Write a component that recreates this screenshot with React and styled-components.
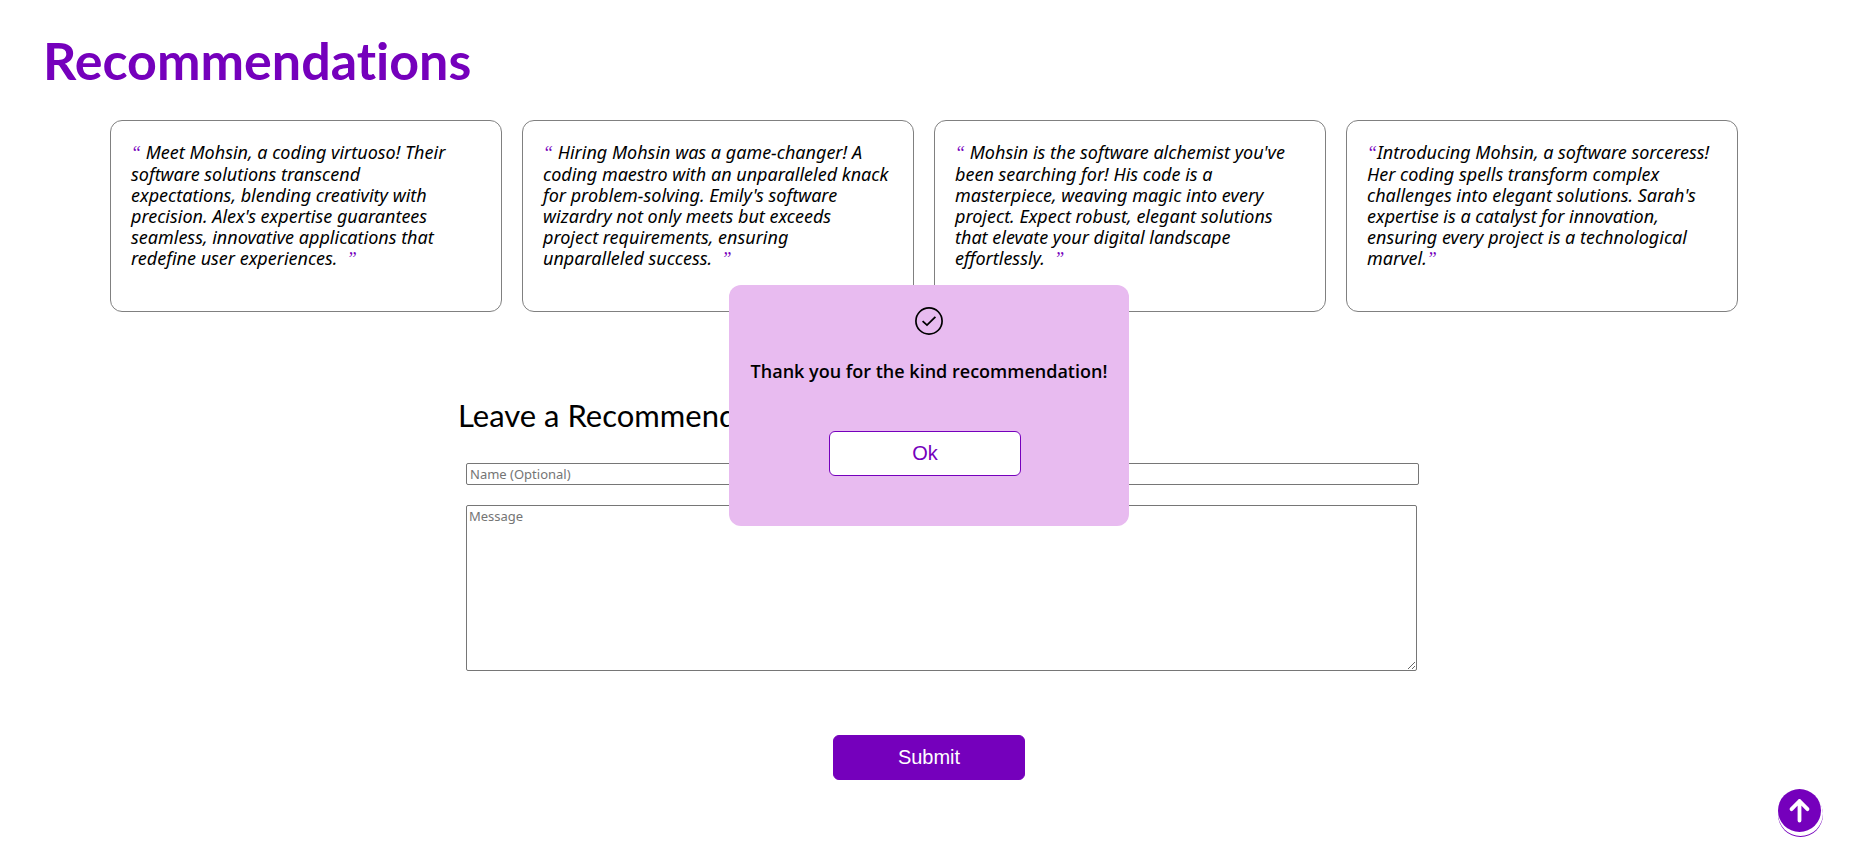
import React from "react";
import styled, { createGlobalStyle, css } from "styled-components";

const purple = "#7500bc";

const GlobalStyle = createGlobalStyle`
  *, *::before, *::after { box-sizing: border-box; }
  body {
    margin: 0;
    background: #fff;
    color: #000;
    font-family: "Trebuchet MS", "Noto Sans", sans-serif;
  }
`;

const Page = styled.main`
  display: flex;
  flex-direction: column;
  min-height: 100vh;
  padding: 30px 4px 70px 0;
`;

const Title = styled.h1`
  margin: 0 0 30px;
  padding-left: 43px;
  color: ${purple};
  font-family: "Trebuchet MS", Lato, sans-serif;
  font-size: 52px;
  font-weight: 700;
  font-variant-ligatures: none;
  line-height: 60px;
`;

const Cards = styled.section`
  display: grid;
  grid-template-columns: repeat(4, minmax(0, 1fr));
  gap: 20px;
  padding: 0 120px 0 110px;
`;

const Card = styled.blockquote`
  min-height: 192px;
  margin: 0;
  padding: 21px 18px 20px 20px;
  border: 1px solid #808080;
  border-radius: 12px;
  font-size: 18px;
  font-style: italic;
  line-height: 21px;
  white-space: pre-line;
`;

const Mark = styled.span`
  color: ${purple};
  font-family: "Liberation Serif", serif;
`;

const Form = styled.form`
  display: flex;
  flex-direction: column;
  align-items: center;
  margin-top: 83px;
`;

const Fields = styled.div`
  display: flex;
  flex-direction: column;
  width: 100%;
  max-width: 994px;
  padding-left: 26px;
`;

const FormTitle = styled.h2`
  margin: 0 0 28px;
  font-family: "Trebuchet MS", Lato, sans-serif;
  font-size: 31px;
  font-weight: 400;
  line-height: 40px;
`;

const fieldStyle = css`
  border: 1px solid #767676;
  border-radius: 2px;
  background: #fff;
  color: #000;
  font-family: inherit;
  font-size: 13px;
  line-height: 16px;

  &::placeholder { color: #757575; }
`;

const NameInput = styled.input`
  ${fieldStyle}
  height: 22px;
  margin: 0 7px 20px 8px;
  padding: 1px 3px;
`;

const MessageInput = styled.textarea`
  ${fieldStyle}
  height: 166px;
  margin: 0 9px 0 8px;
  padding: 2px;
  resize: both;
`;

const Button = styled.button`
  width: 192px;
  height: 45px;
  padding: 0;
  border: 1px solid ${purple};
  border-radius: 6px;
  background: ${(p) => (p.$outline ? "#fff" : purple)};
  color: ${(p) => (p.$outline ? purple : "#fff")};
  font-family: "Liberation Sans", Arial, sans-serif;
  font-size: 20px;
  cursor: pointer;
`;

const SubmitRow = styled.div`
  margin-top: 64px;
`;

const Overlay = styled.div`
  position: fixed;
  inset: 0 4px 0 0;
  display: flex;
  align-items: flex-start;
  justify-content: center;
  padding-top: 285px;
  pointer-events: none;
`;

const Dialog = styled.div`
  display: flex;
  flex-direction: column;
  align-items: center;
  width: 400px;
  min-height: 241px;
  padding: 22px 12px;
  border-radius: 12px;
  background: #e8bbf0;
  pointer-events: auto;
`;

const DialogText = styled.p`
  margin: 24px 0 48px;
  font-family: "Trebuchet MS", "Open Sans", sans-serif;
  font-size: 18px;
  font-weight: 600;
  line-height: 24px;
  white-space: nowrap;
`;

const DialogActions = styled.div`
  padding-right: 8px;
`;

const ToTop = styled.a`
  position: fixed;
  right: 41px;
  bottom: 18px;
  display: flex;
  align-items: center;
  justify-content: center;
  width: 43px;
  height: 43px;
  border-radius: 50%;
  background: ${purple};
  box-shadow: 1px 3px 0 1px #fff, 1px 4px 0 1px ${purple};
`;

const recommendations = [
  {
    text: `Meet Mohsin, a coding virtuoso! Their
software solutions transcend
expectations, blending creativity with
precision. Alex's expertise guarantees
seamless, innovative applications that
redefine user experiences.`,
  },
  {
    text: `Hiring Mohsin was a game-changer! A
coding maestro with an unparalleled knack
for problem-solving. Emily's software
wizardry not only meets but exceeds
project requirements, ensuring
unparalleled success.`,
  },
  {
    text: `Mohsin is the software alchemist you've
been searching for! His code is a
masterpiece, weaving magic into every
project. Expect robust, elegant solutions
that elevate your digital landscape
effortlessly.`,
  },
  {
    text: `Introducing Mohsin, a software sorceress!
Her coding spells transform complex
challenges into elegant solutions. Sarah's
expertise is a catalyst for innovation,
ensuring every project is a technological
marvel.`,
    tight: true,
  },
];

function Recommendation({ text, tight }) {
  const open = tight ? "" : "\u00a0";
  const close = tight ? "" : "\u00a0\u00a0";
  return (
    <Card>
      <Mark>“</Mark>
      {open}
      {text}
      {close}
      <Mark>”</Mark>
    </Card>
  );
}

function CheckIcon() {
  return (
    <svg width="28" height="28" viewBox="0 0 28 28" fill="none" stroke="#000" aria-hidden="true">
      <circle cx="14" cy="14" r="13.1" strokeWidth="1.7" />
      <path d="M7.6 14.1 12 18.1 20.4 9.8" strokeWidth="1.8" />
    </svg>
  );
}

function ArrowIcon() {
  return (
    <svg width="43" height="43" viewBox="0 0 43 43" fill="none" stroke="#fff" aria-hidden="true">
      <path d="M21.5 31.5V12M13.5 20.2 21.5 12l8 8.2" strokeWidth="3.8" strokeLinecap="round" strokeLinejoin="round" />
    </svg>
  );
}

export default function App() {
  return (
    <>
      <GlobalStyle />
      <Page id="top">
        <Title>Recommendations</Title>
        <Cards>
          {recommendations.map((r) => (
            <Recommendation key={r.text} {...r} />
          ))}
        </Cards>
        <Form onSubmit={(e) => e.preventDefault()}>
          <Fields>
            <FormTitle>Leave a Recommendation</FormTitle>
            <NameInput type="text" aria-label="Name (Optional)" placeholder="Name (Optional)" />
            <MessageInput aria-label="Message" placeholder="Message" />
          </Fields>
          <SubmitRow>
            <Button type="submit">Submit</Button>
          </SubmitRow>
        </Form>
      </Page>
      <Overlay>
        <Dialog role="dialog" aria-labelledby="thanks">
          <CheckIcon />
          <DialogText id="thanks">Thank you for the kind recommendation!</DialogText>
          <DialogActions>
            <Button type="button" $outline>Ok</Button>
          </DialogActions>
        </Dialog>
      </Overlay>
      <ToTop href="#top" aria-label="Back to top">
        <ArrowIcon />
      </ToTop>
    </>
  );
}
